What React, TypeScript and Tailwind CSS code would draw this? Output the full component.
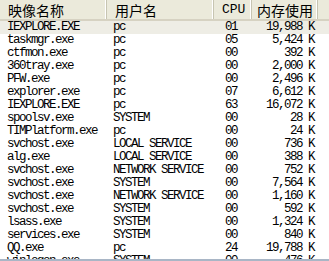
const rows: [string, string, string, string][] = [
  ["IEXPLORE.EXE", "pc", "01", "19,988 K"],
  ["taskmgr.exe", "pc", "05", "5,424 K"],
  ["ctfmon.exe", "pc", "00", "392 K"],
  ["360tray.exe", "pc", "00", "2,000 K"],
  ["PFW.exe", "pc", "00", "2,496 K"],
  ["explorer.exe", "pc", "07", "6,612 K"],
  ["IEXPLORE.EXE", "pc", "63", "16,072 K"],
  ["spoolsv.exe", "SYSTEM", "00", "28 K"],
  ["TIMPlatform.exe", "pc", "00", "24 K"],
  ["svchost.exe", "LOCAL SERVICE", "00", "736 K"],
  ["alg.exe", "LOCAL SERVICE", "00", "388 K"],
  ["svchost.exe", "NETWORK SERVICE", "00", "752 K"],
  ["svchost.exe", "SYSTEM", "00", "7,564 K"],
  ["svchost.exe", "NETWORK SERVICE", "00", "1,160 K"],
  ["svchost.exe", "SYSTEM", "00", "592 K"],
  ["lsass.exe", "SYSTEM", "00", "1,324 K"],
  ["services.exe", "SYSTEM", "00", "840 K"],
  ["QQ.exe", "pc", "24", "19,788 K"],
  ["winlogon.exe", "SYSTEM", "00", "476 K"],
];

const mono = "font-['Liberation_Mono','Noto_Sans_CJK_SC',monospace]";
const cjk = "font-['Noto_Sans_CJK_SC','Liberation_Sans',sans-serif]";

function HeaderCell({ label, w, right, latin }: { label: string; w: string; right?: boolean; latin?: boolean }) {
  return (
    <div className={`${w} h-full flex items-center border-r border-[#c7c5b2] shadow-[inset_-1px_0_0_#ffffff] ${right ? "justify-end pr-[4px]" : ""}`}>
      <span className={`${latin ? `${mono} text-[13px]` : `${cjk} text-[14px]`} text-black leading-none ${right ? "" : "pl-[8px]"}`}>{label}</span>
    </div>
  );
}

export default function App() {
  return (
    <div className="w-[329px] h-[261px] bg-white overflow-hidden flex flex-col relative">
      {/* header */}
      <div className="h-[21px] shrink-0 flex bg-[#ebeadb] border-b-2 border-[#d6d2c2]">
        <HeaderCell label="映像名称" w="w-[107px]" />
        <HeaderCell label="用户名" w="w-[107px]" />
        <HeaderCell label="CPU" w="w-[38px]" latin />
        <HeaderCell label="内存使用" w="w-[66px]" right />
        <div className="flex-1" />
      </div>

      {/* rows */}
      <div className={`flex flex-col ${mono} text-[12.5px] tracking-[-1.5px] text-black`}>
        {rows.map((r, i) => (
          <div key={i} className={`h-[13px] shrink-0 flex items-center ${i === 0 ? "bg-[#eeede5]" : ""}`}>
            <div className="w-[107px] pl-[7px] whitespace-nowrap">{r[0]}</div>
            <div className="w-[107px] pl-[6px] whitespace-nowrap">{r[1]}</div>
            <div className="w-[38px] pl-[11px]">{r[2]}</div>
            <div className="w-[66px] text-right pr-[4px] whitespace-pre">{r[3]}</div>
          </div>
        ))}
      </div>

      {/* bottom border */}
      <div className="absolute left-0 right-0 top-[259px] h-[2px] bg-[#a9b6c6]" />
    </div>
  );
}
